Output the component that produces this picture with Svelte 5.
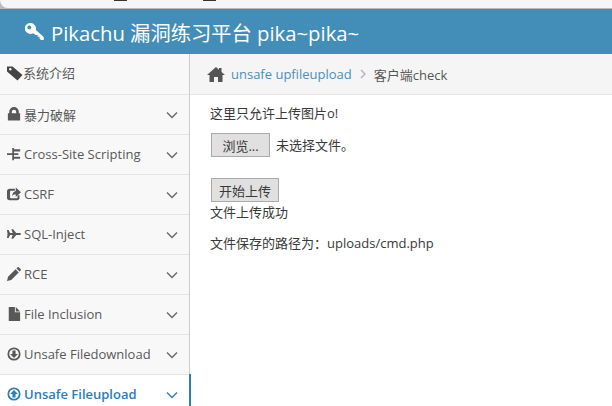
<script>
	const menu = [
		{ label: '暴力破解', icon: 'lock' },
		{ label: 'Cross-Site Scripting', icon: 'tree' },
		{ label: 'CSRF', icon: 'share' },
		{ label: 'SQL-Inject', icon: 'plane' },
		{ label: 'RCE', icon: 'pencil' },
		{ label: 'File Inclusion', icon: 'file' },
		{ label: 'Unsafe Filedownload', icon: 'down' },
		{ label: 'Unsafe Fileupload', icon: 'up', active: true }
	]
</script>

{#snippet icon(name)}
	<svg class="icon" viewBox="0 0 16 16" aria-hidden="true">
		{#if name === 'lock'}
			<path d="M2.500 7V5.500a5.500 5.500 0 0 1 11 0V7h1.500v8.500H1V7zm3 0h5V5.500a2.500 2.500 0 0 0-5 0z" />
		{:else if name === 'tree'}
			<path d="M6 1h2v14H6zM8 2.500h7v2.500H8zM8 7h5v2H8zM8 11h7v2.500H8zM0 7h6v2H0z" />
		{:else if name === 'share'}
			<path d="M3 2h6v2.200H4.500a1 1 0 0 0-1 1v6.600a1 1 0 0 0 1 1h6.600a1 1 0 0 0 1-1V9.500h2.200V12a3 3 0 0 1-3 3H3a3 3 0 0 1-3-3V5a3 3 0 0 1 3-3z" />
			<path d="M10 .5L16 6l-6 5.500V8.200C8 8.200 6.500 9 6 11c-.3-3.500 1.500-6 4-6.500z" />
		{:else if name === 'plane'}
			<path d="M0 3.500h1.800L3.500 6.800h3L5 2.500h2l3.500 4.300H14c1.200 0 2 .6 2 1.200s-.8 1.200-2 1.200h-3.500L7 13.500H5l1.500-4.300h-3L1.800 12.500H0l.6-4.500z" />
		{:else if name === 'pencil'}
			<path d="M0 16l1.200-4.800 8.600-8.600 3.600 3.600-8.600 8.600zM10.800 1.600l1-1a1.400 1.400 0 0 1 2 0l1.600 1.600a1.400 1.400 0 0 1 0 2l-1 1z" />
		{:else if name === 'file'}
			<path d="M2 0h7v6h6v10H2zM10 0l5 5h-5z" />
		{:else if name === 'down'}
			<path fill-rule="evenodd" d="M8 .5a7.500 7.500 0 1 1 0 15 7.500 7.500 0 0 1 0-15zm0 2a5.500 5.500 0 1 0 0 11 5.500 5.500 0 0 0 0-11zM6.200 4h3.600v4H12.500L8 12.500 3.500 8h2.700z" />
		{:else if name === 'up'}
			<path fill-rule="evenodd" d="M8 .5a7.500 7.500 0 1 1 0 15 7.500 7.500 0 0 1 0-15zm0 2a5.500 5.500 0 1 0 0 11 5.500 5.500 0 0 0 0-11zM6.200 12h3.600V8H12.500L8 3.500 3.500 8h2.700z" />
		{/if}
	</svg>
{/snippet}

<div class="page">
	<div class="chrome">
		<div class="chrome-inner">
			<i></i>
			<i></i>
		</div>
	</div>
	<header class="navbar">
		<svg class="key" viewBox="0 0 19 18" aria-hidden="true">
			<path fill-rule="evenodd" d="M5.500 0a5.500 5.500 0 0 1 5.300 7l7.700 6.800.500 3-3 .2-1.500-1.400v-1.800h-1.900v-1.800h-1.900L8.200 10.200A5.500 5.500 0 1 1 5.500 0zM4.300 2.400a2 2 0 1 0 0 4 2 2 0 0 0 0-4z" />
		</svg>
		<span>Pikachu 漏洞练习平台 pika~pika~</span>
	</header>
	<div class="body">
		<nav class="sidebar">
			<div class="item first">
				<svg class="tag" viewBox="0 0 16 16" aria-hidden="true">
					<path fill-rule="evenodd" d="M0 1.500h5.500L15.500 10l-5 5.500L0 6.500zm3.300 1.500a1.300 1.300 0 1 0 0 2.600 1.300 1.300 0 0 0 0-2.600z" />
				</svg>
				<span>系统介绍</span>
			</div>
			{#each menu as m}
				<div class="item" class:active={m.active}>
					{@render icon(m.icon)}
					<span class="label">{m.label}</span>
					<svg class="chev" viewBox="0 0 12 8" aria-hidden="true">
						<path d="M1 1.500L6 6.500l5-5" />
					</svg>
				</div>
			{/each}
		</nav>
		<main class="content">
			<div class="crumbs">
				<svg class="home" viewBox="0 0 18 16" aria-hidden="true">
					<path d="M9 1l3 2.700V2h2.500v3.900L18 9h-2.500v7h-4.500v-5H7v5H2.500V9H0z" />
				</svg>
				<a href="#top">unsafe upfileupload</a>
				<svg class="sep" viewBox="0 0 6 10" aria-hidden="true"><path d="M1 1l4 4-4 4" /></svg>
				<span>客户端check</span>
			</div>
			<div class="main">
				<p class="hint">这里只允许上传图片o!</p>
				<div class="file">
					<button type="button">浏览...</button>
					<span class="none">未选择文件。</span>
				</div>
				<button type="button" class="submit">开始上传</button>
				<p class="ok">文件上传成功</p>
				<p class="path">文件保存的路径为：uploads/cmd.php</p>
			</div>
		</main>
	</div>
</div>

<style>
	:global(body) {
		margin: 0;
		background: #fff;
	}

	.page {
		width: 612px;
		height: 406px;
		overflow: hidden;
		display: flex;
		flex-direction: column;
		font-family: 'Open Sans', 'Noto Sans CJK SC', sans-serif;
		font-size: 13px;
		color: #393939;
	}

	.chrome {
		height: 9px;
		flex: none;
		background: #bbb;
	}

	.chrome-inner {
		height: 8px;
		display: flex;
		gap: 76px;
		padding-left: 114px;
		background: #f6f6f6;
		border-bottom-left-radius: 8px;
	}

	.chrome-inner i {
		width: 13px;
		height: 1px;
		background: #333;
	}

	.navbar {
		height: 45px;
		flex: none;
		display: flex;
		align-items: center;
		gap: 7px;
		padding-left: 25px;
		background: #438eb9;
		color: #fff;
		font-size: 20.3px;
	}

	.key {
		width: 19px;
		height: 18px;
		fill: #fff;
	}

	.body {
		flex: 1;
		display: flex;
		min-height: 0;
	}

	.sidebar {
		width: 189px;
		flex: none;
		background: #f2f2f2;
		border-right: 1px solid #ccc;
		height: 352px;
	}

	.item {
		box-sizing: border-box;
		height: 40px;
		display: flex;
		align-items: center;
		padding: 0 0 1px 7px;
		background: #f8f8f8;
		border-bottom: 1px solid #e5e5e5;
		color: #585858;
		position: relative;
	}

	.item.first {
		height: 41px;
		padding-bottom: 3px;
	}

	.item.active {
		background: #fff;
		color: #2b7dbc;
		font-weight: 600;
	}

	.item.active::after {
		content: '';
		position: absolute;
		right: -2px;
		top: -1px;
		bottom: 0;
		width: 2px;
		background: #2b7dbc;
	}

	.icon {
		width: 14px;
		height: 14px;
		fill: currentColor;
		flex: none;
	}

	.tag {
		width: 16px;
		height: 16px;
		fill: #444;
		flex: none;
	}

	.label {
		margin-left: 3px;
		white-space: nowrap;
	}

	.chev {
		position: absolute;
		left: 166px;
		top: 50%;
		margin-top: -4px;
		width: 12px;
		height: 8px;
		fill: none;
		stroke: #666;
		stroke-width: 1.300;
	}

	.active .chev {
		stroke: #2b7dbc;
	}

	.content {
		flex: 1;
		min-width: 0;
	}

	.crumbs {
		height: 40px;
		display: flex;
		align-items: center;
		padding-left: 17px;
		background: #f5f5f5;
		border-bottom: 1px solid #e5e5e5;
		color: #555;
	}

	.home {
		width: 18px;
		height: 16px;
		fill: #555;
		margin-right: 6px;
	}

	.crumbs a {
		color: #4c8fbd;
		text-decoration: none;
	}

	.sep {
		width: 6px;
		height: 10px;
		fill: none;
		stroke: #b2b6bf;
		stroke-width: 1.500;
		margin: 0 8px;
	}

	.main {
		padding: 8px 20px;
	}

	p {
		margin: 0;
	}

	.file {
		display: flex;
		align-items: center;
		gap: 6px;
		margin: 11px 0 0 1px;
	}

	.none {
		margin-bottom: 2px;
	}

	button {
		font: inherit;
		color: #393939;
		background: #e0e0e0;
		border: 1px solid #aaa;
		padding: 0;
		height: 24px;
	}

	.file button {
		width: 59px;
	}

	.submit {
		display: block;
		width: 68px;
		margin: 21px 0 0 1px;
	}

	.path {
		margin-top: 12px;
	}
</style>
